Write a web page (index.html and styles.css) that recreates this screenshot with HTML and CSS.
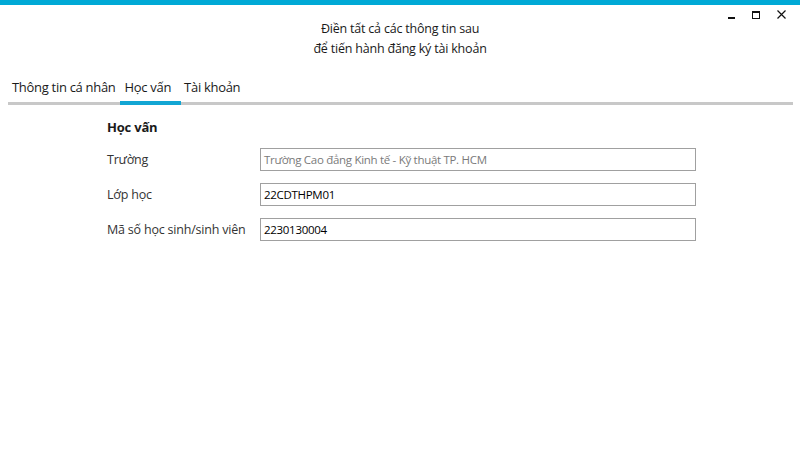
FILE: index.html
```html
<!DOCTYPE html>
<html lang="vi">
<head>
<meta charset="utf-8">
<link rel="stylesheet" href="styles.css">
</head>
<body>
<div class="window">
  <div class="topbar"></div>
  <div class="header">
    <div class="title">Điền tất cả các thông tin sau<br>để tiến hành đăng ký tài khoản</div>
    <div class="controls">
      <span class="min"></span>
      <span class="max"></span>
      <svg class="close" viewBox="0 0 9 9" width="9" height="9"><path d="M0.5 0.5 L8.5 8.5 M8.5 0.5 L0.5 8.5" stroke="#111" stroke-width="1.2" fill="none"/></svg>
    </div>
  </div>
  <div class="tabs">
    <span class="tab">Thông tin cá nhân</span>
    <span class="tab active">Học vấn</span>
    <span class="tab">Tài khoản</span>
  </div>
  <div class="content">
    <div class="section">Học vấn</div>
    <div class="form">
      <label class="lbl">Trường</label>
      <div class="input disabled">Trường Cao đẳng Kinh tế - Kỹ thuật TP. HCM</div>
      <label class="lbl">Lớp học</label>
      <div class="input">22CDTHPM01</div>
      <label class="lbl">Mã số học sinh/sinh viên</label>
      <div class="input">2230130004</div>
    </div>
  </div>
</div>
</body>
</html>
```
FILE: styles.css
```css
* { box-sizing: border-box; }
html, body { margin: 0; padding: 0; background: #fff; }
body {
  font-family: "Open Sans", "Noto Sans", sans-serif;
  color: #1a1a1a;
  width: 800px;
  height: 450px;
  overflow: hidden;
}
.topbar { height: 5px; background: #00a9d6; }
.header {
  position: relative;
  height: 67px;
}
.title {
  text-align: center;
  font-size: 12.5px;
  line-height: 20px;
  padding-top: 14px;
  letter-spacing: -0.2px;
}
.controls {
  position: absolute;
  top: 5px;
  right: 14px;
  height: 9px;
  display: flex;
  gap: 17px;
  align-items: flex-end;
}
.min { display: block; width: 7px; height: 2px; background: #111; }
.max { display: block; width: 8px; height: 8px; border: 1px solid #111; border-top-width: 2px; }
.close { display: block; }
.tabs {
  margin: 0 7px 0 8px;
  display: flex;
  border-bottom: 3px solid #c8c8c8;
  height: 33px;
}
.tab {
  font-size: 13px;
  padding: 6px 4px 0 4px;
  line-height: 18px;
  letter-spacing: -0.3px;
  color: #1a1a1a;
}
.tab.active {
  border-bottom: 4px solid #12a6d4;
  margin-bottom: -3px;
  padding-left: 5px;
  padding-right: 10px;
}
.tab.active + .tab { padding-left: 3px; }
.content { padding: 13px 0 0 107px; }
.section { font-weight: bold; font-size: 13px; line-height: 18px; letter-spacing: -0.2px; }
.form {
  margin-top: 12px;
  display: grid;
  grid-template-columns: 153px 436px;
  row-gap: 12px;
  align-items: center;
}
.lbl { font-size: 12.5px; color: #333; letter-spacing: -0.2px; }
.input {
  height: 23px;
  border: 1px solid #a0a0a0;
  font-size: 11.5px;
  line-height: 21px;
  padding-left: 3px;
  letter-spacing: -0.3px;
  color: #000;
}
.input.disabled { color: #7a7a7a; }
```
